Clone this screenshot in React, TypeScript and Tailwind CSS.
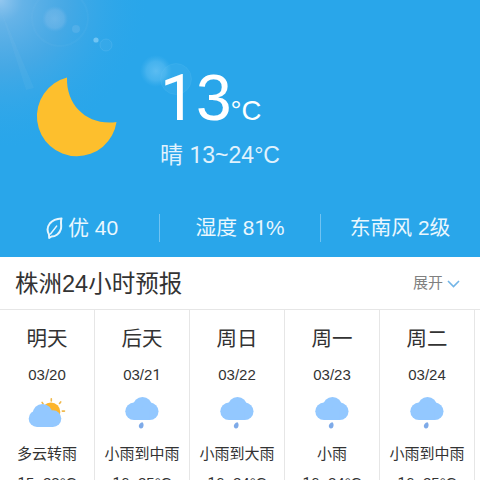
const days = [
  { day: '明天', date: '03/20', text: '多云转雨', temp: '15~23°C', sun: true },
  { day: '后天', date: '03/21', text: '小雨到中雨', temp: '16~25°C', sun: false },
  { day: '周日', date: '03/22', text: '小雨到大雨', temp: '16~24°C', sun: false },
  { day: '周一', date: '03/23', text: '小雨', temp: '16~24°C', sun: false },
  { day: '周二', date: '03/24', text: '小雨到中雨', temp: '16~25°C', sun: false },
];

// Sets the digit 1 in Roboto, whose form has no foot serif.
function Num({ text }: { text: string }) {
  return (
    <span>
      {text.split(/(1)/).map((part, i) =>
        part === '1' ? <span key={i} className="font-['Roboto',sans-serif]">1</span> : part,
      )}
    </span>
  );
}

function Sky() {
  return (
    <svg className="absolute inset-0" width="480" height="257" viewBox="0 0 480 257">
      <defs>
        <radialGradient id="glow" gradientUnits="userSpaceOnUse" cx="0" cy="0" r="150">
          <stop offset="0" stopColor="#a6cdf0" stopOpacity="0.85" />
          <stop offset="0.15" stopColor="#86bae6" stopOpacity="0.65" />
          <stop offset="0.45" stopColor="#62abe0" stopOpacity="0.5" />
          <stop offset="1" stopColor="#29a6ea" stopOpacity="0" />
        </radialGradient>
        <radialGradient id="flare">
          <stop offset="0" stopColor="#6cc4f4" stopOpacity="0.75" />
          <stop offset="0.6" stopColor="#5cbdf2" stopOpacity="0.55" />
          <stop offset="1" stopColor="#4ab5ef" stopOpacity="0" />
        </radialGradient>
        <radialGradient id="orb">
          <stop offset="0" stopColor="#8cc2ec" stopOpacity="0.5" />
          <stop offset="0.7" stopColor="#80bcea" stopOpacity="0.4" />
          <stop offset="1" stopColor="#70b4e8" stopOpacity="0" />
        </radialGradient>
      </defs>
      <rect width="480" height="257" fill="url(#glow)" />
      <circle cx="55" cy="19" r="13" fill="url(#orb)" />
      <circle cx="60" cy="18" r="28" fill="none" stroke="#8cc8f0" strokeOpacity="0.07" strokeWidth="2" />
      <circle cx="76" cy="29" r="4" fill="#8cc4ee" fillOpacity="0.25" />
      <circle cx="96" cy="40" r="2.6" fill="#84cdf7" fillOpacity="0.75" />
      <circle cx="106" cy="45" r="6" fill="#6abcf0" fillOpacity="0.12" stroke="#7cc8f4" strokeOpacity="0.22" />
      <circle cx="156" cy="71" r="16" fill="url(#flare)" />
      <circle cx="176" cy="79" r="15.5" fill="#6ac4f4" fillOpacity="0.14" stroke="#7ccbf5" strokeOpacity="0.12" />
      <path d="M0 8L34 88L26 90Z" fill="#a4d0f2" fillOpacity="0.07" />
      <path d="M67 77.5A40 40 0 1 0 116.5 122C88 126 66 106 67 77.5Z" fill="#fdbf2d" />
    </svg>
  );
}

function Leaf() {
  return (
    <svg className="mr-[4px]" width="18" height="24" viewBox="0 0 18 24" fill="none" stroke="#e6f5fd" strokeWidth="2" strokeLinecap="round" strokeLinejoin="round">
      <path d="M15.500 2.500C11 2.700 6.500 4.200 3.800 7.500C1.300 10.800 1 15 3 18.500L3.200 22L5.500 20.500C9.500 20.500 13.800 17.500 14.900 13C15.800 9 14.200 6.500 15.500 2.500Z" />
      <path d="M4.500 18L10.700 10" strokeWidth="1.400" />
    </svg>
  );
}

function WeatherIcon({ sun }: { sun: boolean }) {
  return sun ? (
    <svg width="44" height="36" viewBox="0 0 44 36">
      <circle cx="25.900" cy="14.900" r="9.400" fill="#fdb52c" />
      <path d="M26.300 1.700V3.900M17.100 5.400L18.100 7M35.700 4.900L34.500 6.400M37.300 14.100H39.500" stroke="#f0b94c" strokeWidth="1.600" strokeLinecap="round" />
      <g fill="#93c8ff">
        <circle cx="12" cy="21.700" r="8.300" />
        <circle cx="17.500" cy="16.800" r="9.800" />
        <circle cx="27.900" cy="21.600" r="8.400" />
        <rect x="12" y="20" width="16" height="10" />
      </g>
    </svg>
  ) : (
    <svg width="44" height="36" viewBox="0 0 44 36">
      <g fill="#93c8ff">
        <circle cx="14" cy="14.300" r="8.700" />
        <circle cx="22.500" cy="9.600" r="9.600" />
        <circle cx="29.800" cy="14.300" r="8.700" />
        <rect x="14" y="13" width="15.800" height="10" />
      </g>
      <path d="M22.300 25.300C24.300 26.500 24 31.500 21 31.500C17.800 31.300 18 26.500 22.300 25.300Z" fill="#7eaae8" />
    </svg>
  );
}

export default function App() {
  return (
    <div className="h-[480px] w-[480px] overflow-hidden bg-white font-['Liberation_Sans','Noto_Sans_CJK_SC',sans-serif] text-[#333]">
      <header className="relative h-[257px] bg-[#29a6ea] text-white">
        <Sky />
        <div className="relative flex h-[199px] flex-col pl-[160px] pt-[66px]">
          <div className="flex h-[64px] items-baseline leading-[64px]">
            <span className="text-[64px]"><Num text="13" /></span>
            <span className="-ml-px text-[27.500px]">°C</span>
          </div>
          <div className="mt-[9px] h-[32px] text-[23px] leading-[32px] text-[#e0f2fd]"><Num text="晴 13~24°C" /></div>
        </div>
        <div className="relative flex h-[58px] items-center text-[21px] leading-[30px] text-[#eaf7fe]">
          <div className="flex w-[159px] items-center pl-[46px]"><Leaf />优 40</div>
          <div className="h-[28px] w-px bg-[#70c3f2]" />
          <div className="w-[160px] text-center text-[20.800px]"><Num text="湿度 81%" /></div>
          <div className="h-[28px] w-px bg-[#70c3f2]" />
          <div className="w-[158px] text-center text-[20.800px]">东南风 2级</div>
        </div>
      </header>
      <section className="flex h-[53px] items-center justify-between border-b border-[#e6e6e6] pl-[15px] pr-[20px]">
        <h1 className="pt-[2px] text-[23.500px] leading-[34px]">株洲24小时预报</h1>
        <div className="flex items-center gap-[4px] pt-px text-[15px] text-[#808080]">
          展开
          <svg width="13" height="8" viewBox="0 0 13 8" fill="none" stroke="#72b5e7" strokeWidth="1.600"><path d="M1 1L6.500 6.500L12 1" /></svg>
        </div>
      </section>
      <section className="flex w-[570px]">
        {days.map((d) => (
          <article key={d.date} className="flex h-[200px] w-[95px] shrink-0 flex-col items-center border-r border-[#e6e6e6] pt-[14px]">
            <h2 className="h-[30px] text-[20.500px] leading-[30px]">{d.day}</h2>
            <div className="mt-[11px] h-[20px] text-[15px] leading-[20px]"><Num text={d.date} /></div>
            <div className="mt-[12px] h-[36px]"><WeatherIcon sun={d.sun} /></div>
            <div className="mt-[10px] h-[22px] whitespace-nowrap text-[15px] leading-[22px]">{d.text}</div>
            <div className="mt-[8px] text-[15px] leading-[20px]"><Num text={d.temp} /></div>
          </article>
        ))}
      </section>
    </div>
  );
}
